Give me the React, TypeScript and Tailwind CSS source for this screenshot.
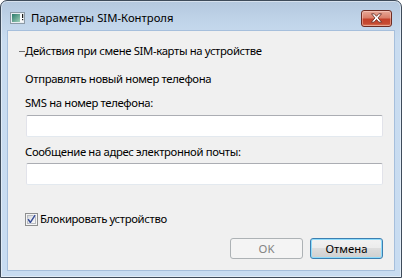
import React from "react";

function TitleIcon() {
  return (
    <svg width="15" height="12" viewBox="0 0 15 12">
      <defs>
        <linearGradient id="ig" x1="0" y1="0" x2="1" y2="1">
          <stop offset="0" stopColor="#2c7a6c" />
          <stop offset="1" stopColor="#9fd0b8" />
        </linearGradient>
      </defs>
      <rect x="0.5" y="0.5" width="14" height="11" fill="#e9eef2" stroke="#8c9aa6" />
      <rect x="2" y="2" width="8" height="8" fill="url(#ig)" />
      <rect x="10" y="2" width="3" height="8" fill="#f7f9fa" />
      <rect x="12" y="2" width="1.2" height="4" fill="#1a1a1a" />
      <rect x="12" y="7" width="1.2" height="1.2" fill="#1a1a1a" />
    </svg>
  );
}

function CloseX() {
  return (
    <svg width="13" height="10" viewBox="0 0 13 10">
      <path
        d="M1.5 0.8 L4.3 0.8 L6.5 3.3 L8.7 0.8 L11.5 0.8 L8.1 4.9 L11.7 9.2 L8.9 9.2 L6.5 6.5 L4.1 9.2 L1.3 9.2 L4.9 4.9 Z"
        fill="#ffffff"
        stroke="#6b3128"
        strokeWidth="0.9"
        strokeLinejoin="round"
      />
    </svg>
  );
}

function CheckBox() {
  return (
    <svg width="13" height="13" viewBox="0 0 13 13">
      <defs>
        <linearGradient id="cg" x1="0" y1="0" x2="1" y2="1">
          <stop offset="0" stopColor="#d6d8dc" />
          <stop offset="1" stopColor="#fbfbfb" />
        </linearGradient>
      </defs>
      <rect x="0.5" y="0.5" width="12" height="12" fill="#f4f4f4" stroke="#8e8f8f" />
      <rect x="2.5" y="2.5" width="8" height="8" fill="url(#cg)" stroke="#b8bbc0" />
      <path d="M3.3 6.6 L5.4 9.4 L9.8 2.6" fill="none" stroke="#ffffff" strokeWidth="2.6" strokeLinecap="round" strokeLinejoin="round" opacity="0.8" />
      <path d="M3.3 6.6 L5.4 9.4 L9.8 2.6" fill="none" stroke="#3a4f96" strokeWidth="1.6" strokeLinecap="round" strokeLinejoin="round" />
    </svg>
  );
}

function TextBox() {
  return (
    <div className="h-[22px] w-full bg-white border border-t-[#abadb3] border-l-[#e2e3ea] border-r-[#e2e3ea] border-b-[#e3e9ef] rounded-[2px]" />
  );
}

export default function App() {
  return (
    <div className="w-[402px] h-[278px] [font-family:'Noto_Sans',sans-serif] text-[11.3px] leading-[16px] text-black">
      <div className="w-full h-full flex flex-col rounded-t-[7px] border border-[#3e4b5a] bg-[linear-gradient(180deg,#b4c8de_0px,#c0d4e9_20px,#c9dcf0_40px,#c8dcf1_100%)] shadow-[inset_0_0_0_1px_rgba(255,255,255,0.45)]">
        {/* title bar */}
        <div className="h-[29px] shrink-0 flex items-center pt-[5px] pl-[9px] pr-[9px]">
          <TitleIcon />
          <span className="ml-[6px] text-black">Параметры SIM-Контроля</span>
          <div className="ml-auto w-[31px] h-[17px] rounded-[3px] border border-[#6e2c23] flex items-center justify-center bg-[linear-gradient(180deg,#e8a998_0%,#d97f6a_45%,#c4412a_55%,#c64c33_85%,#df8466_100%)] shadow-[inset_0_0_0_1px_rgba(255,220,210,0.45)]">
            <CloseX />
          </div>
        </div>
        {/* client */}
        <div className="mx-[6px] mb-[6px] flex-1 bg-[#f0f0f0] border border-[#a6bfdc] flex flex-col pl-[17px] pr-[11px] pt-[12px] pb-[11px] tracking-[-0.35px]">
          <div className="flex items-center -ml-[6px]">
            <div className="w-[6px] h-px bg-[#6f6f6f]" />
            <span>Действия при смене SIM-карты на устройстве</span>
          </div>
          <div className="mt-[12px]">Отправлять новый номер телефона</div>
          <div className="mt-[8px]">SMS на номер телефона:</div>
          <div className="mt-[4px] pl-px">
            <TextBox />
          </div>
          <div className="mt-[7px]">Сообщение на адрес электронной почты:</div>
          <div className="mt-[3px] pl-px">
            <TextBox />
          </div>
          <div className="mt-[26px] flex items-center">
            <CheckBox />
            <span className="ml-[2px]">Блокировать устройство</span>
          </div>
          <div className="mt-auto flex justify-end gap-[7px] tracking-normal">
            <div className="w-[73px] h-[21px] rounded-[3px] border border-[#adb2b5] bg-[#f4f4f4] text-[#838383] flex items-center justify-center">
              OK
            </div>
            <div className="w-[73px] h-[21px] rounded-[3px] border border-[#3c7fb1] bg-[linear-gradient(180deg,#f2f2f2_0%,#ebebeb_50%,#dddddd_50%,#cfcfcf_100%)] shadow-[inset_0_0_0_1px_#8fdcfb] flex items-center justify-center">
              Отмена
            </div>
          </div>
        </div>
      </div>
    </div>
  );
}
